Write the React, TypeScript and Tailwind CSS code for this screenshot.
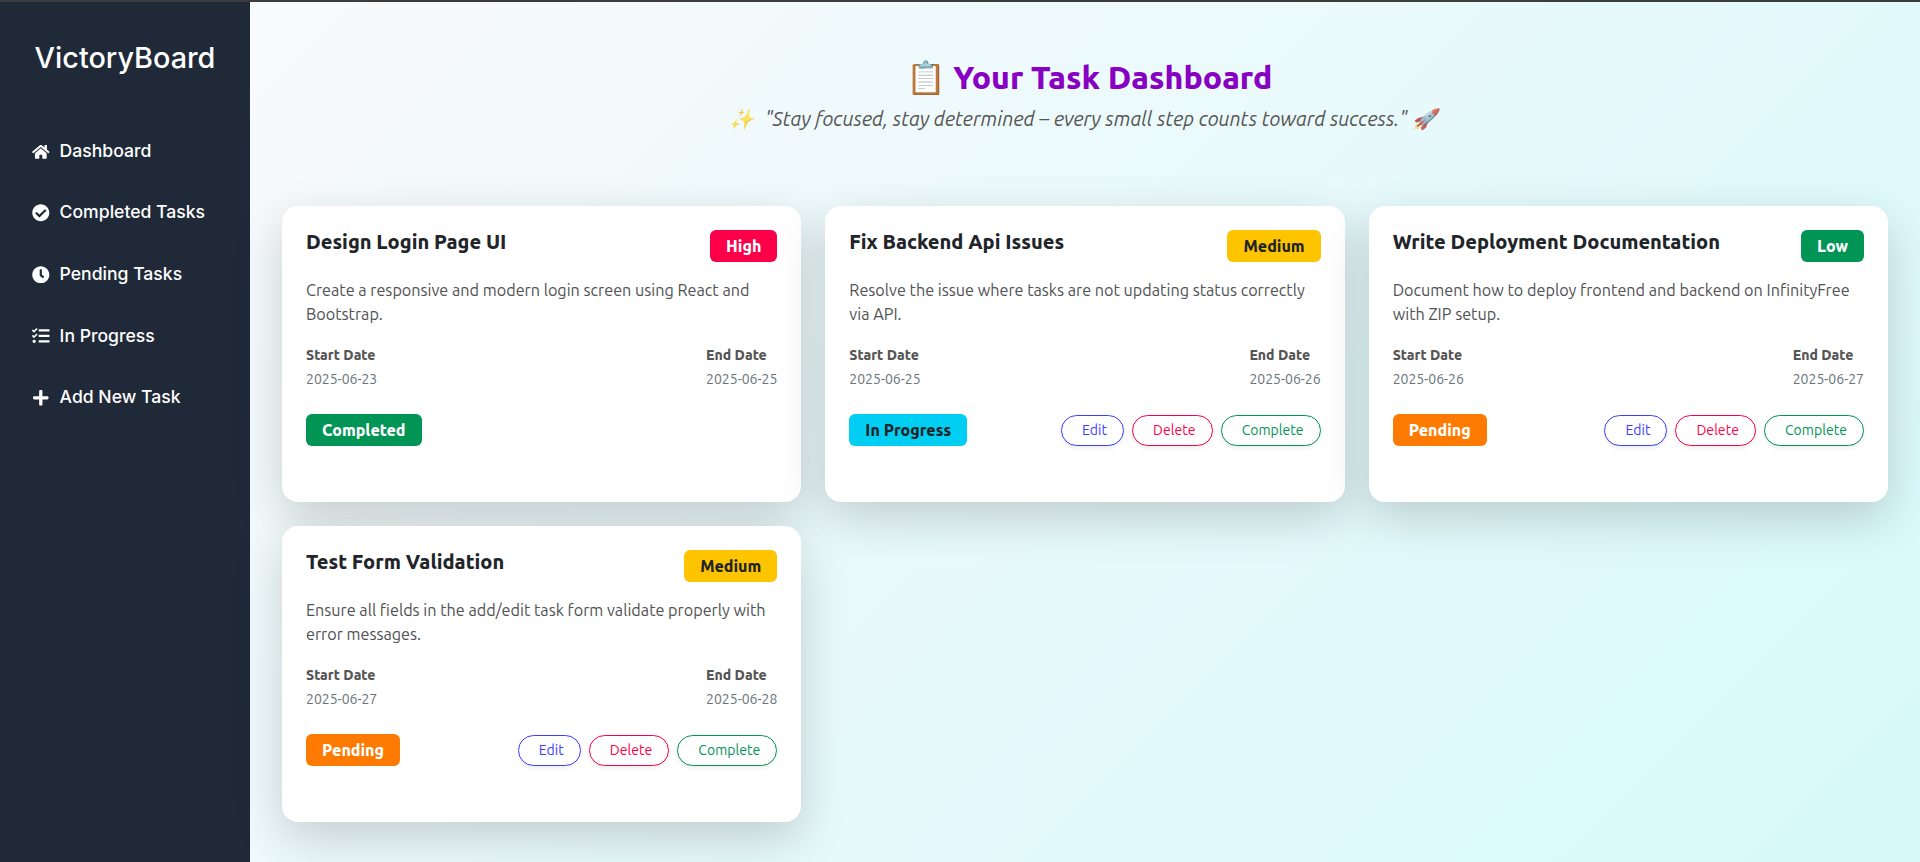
import type { ComponentType } from "react";
import { FaCheckCircle, FaClock, FaHome, FaPlus, FaTasks } from "react-icons/fa";

type Task = {
  title: string;
  description: string;
  start: string;
  end: string;
  priority: "High" | "Medium" | "Low";
  status: "Completed" | "In Progress" | "Pending";
};

const tasks: Task[] = [
  {
    title: "Design Login Page UI",
    description: "Create a responsive and modern login screen using React and Bootstrap.",
    start: "2025-06-23",
    end: "2025-06-25",
    priority: "High",
    status: "Completed",
  },
  {
    title: "Fix Backend Api Issues",
    description: "Resolve the issue where tasks are not updating status correctly via API.",
    start: "2025-06-25",
    end: "2025-06-26",
    priority: "Medium",
    status: "In Progress",
  },
  {
    title: "Write Deployment Documentation",
    description: "Document how to deploy frontend and backend on InfinityFree with ZIP setup.",
    start: "2025-06-26",
    end: "2025-06-27",
    priority: "Low",
    status: "Pending",
  },
  {
    title: "Test Form Validation",
    description: "Ensure all fields in the add/edit task form validate properly with error messages.",
    start: "2025-06-27",
    end: "2025-06-28",
    priority: "Medium",
    status: "Pending",
  },
];

const badgeColors: Record<Task["priority"] | Task["status"], string> = {
  High: "bg-[#fb0049] text-white",
  Medium: "bg-[#ffc400] text-[#212529]",
  Low: "bg-[#009455] text-white",
  Completed: "bg-[#009455] text-white",
  "In Progress": "bg-[#00cef2] text-[#212529]",
  Pending: "bg-[#ff7a00] text-white",
};

const navItems: { label: string; icon: ComponentType<{ className?: string }> }[] = [
  { label: "Dashboard", icon: FaHome },
  { label: "Completed Tasks", icon: FaCheckCircle },
  { label: "Pending Tasks", icon: FaClock },
  { label: "In Progress", icon: FaTasks },
  { label: "Add New Task", icon: FaPlus },
];

function Badge({ label }: { label: Task["priority"] | Task["status"] }) {
  return (
    <span
      className={`flex h-8 shrink-0 items-center rounded-md px-4 text-base leading-none font-extrabold ${badgeColors[label]}`}
    >
      {label}
    </span>
  );
}

function ActionButton({ label, color }: { label: string; color: string }) {
  return (
    <button
      className={`flex h-[31px] items-center rounded-full border bg-white pr-4 pb-px pl-5 text-sm tracking-[0.05px] shadow-[0_2px_4px_rgba(0,0,0,0.075)] ${color}`}
    >
      {label}
    </button>
  );
}

function DateField({ label, value }: { label: string; value: string }) {
  return (
    <div className="text-sm leading-6">
      <div className="font-extrabold text-[#555]">{label}</div>
      <div className="text-[#68727a]">{value}</div>
    </div>
  );
}

function TaskCard({ task }: { task: Task }) {
  return (
    <article className="relative h-[296px] rounded-2xl bg-white p-6 shadow-[0_16px_48px_rgba(0,0,0,0.175)]">
      <div className="mb-4 flex items-start justify-between">
        <h2 className="text-xl leading-6 font-extrabold text-[#212529]">{task.title}</h2>
        <Badge label={task.priority} />
      </div>
      <p className="mb-[17px] text-[16.2px] leading-6 text-[#505254]">{task.description}</p>
      <div className="mb-[23px] flex justify-between">
        <DateField label="Start Date" value={task.start} />
        <DateField label="End Date" value={task.end} />
      </div>
      <div className="flex items-end justify-between">
        <Badge label={task.status} />
        {task.status !== "Completed" && (
          <div className="flex gap-2">
            <ActionButton label="Edit" color="border-[#3d3dff] text-[#3d3dff]" />
            <ActionButton label="Delete" color="border-[#fb0049] text-[#fb0049]" />
            <ActionButton label="Complete" color="border-[#009455] text-[#009455]" />
          </div>
        )}
      </div>
    </article>
  );
}

export default function App() {
  return (
    <div className="flex h-[862px] w-full overflow-hidden border-t-2 border-[#3c3c3c] bg-white font-['Ubuntu','Noto_Sans',sans-serif]">
      <aside className="w-[250px] shrink-0 bg-[#1f2937] font-['Inter',sans-serif] font-medium text-white">
        <div className="pt-[38px] text-center text-[28.8px] leading-[35px]">VictoryBoard</div>
        <nav className="mt-[45px] flex flex-col px-8">
          {navItems.map(({ label, icon: Icon }) => (
            <a key={label} className="flex h-[61.6px] items-center gap-2.5 text-[17.6px] leading-[26px]">
              <Icon className="mt-px shrink-0" />
              {label}
            </a>
          ))}
        </nav>
      </aside>
      <main className="flex-1 bg-linear-135 from-[#f9fafc] to-[#d6f9fa] px-8 pt-14">
        <header className="text-center">
          <h1 className="pl-2 text-[32px] leading-[38px] font-extrabold text-[#8800c2]">📋 Your Task Dashboard</h1>
          <p className="mt-2 flex justify-center gap-[5px] pr-1 text-xl leading-[30px] text-[#555] italic">
            <span className="pr-1.5 opacity-75">✨</span>
            <span>"Stay focused, stay determined – every small step counts toward success."</span>
            <span className="opacity-75">🚀</span>
          </p>
        </header>
        <section className="mt-[72px] grid grid-cols-3 gap-6">
          {tasks.map((task) => (
            <TaskCard key={task.title} task={task} />
          ))}
        </section>
      </main>
    </div>
  );
}
